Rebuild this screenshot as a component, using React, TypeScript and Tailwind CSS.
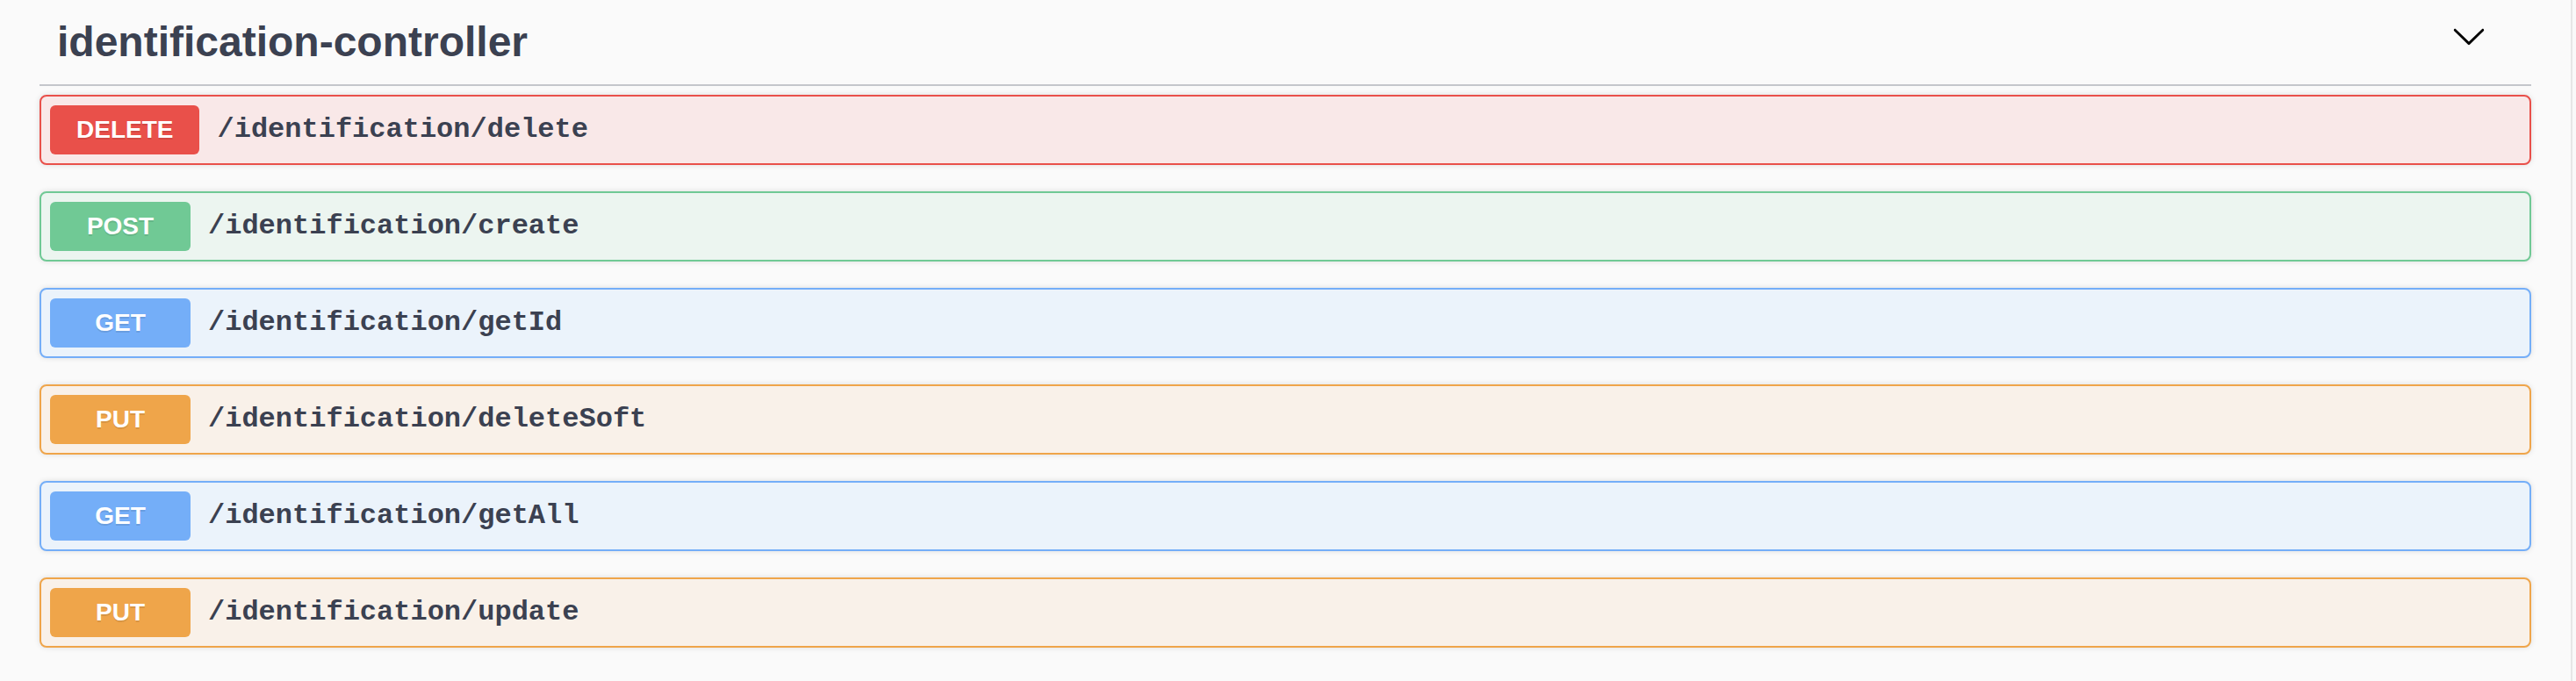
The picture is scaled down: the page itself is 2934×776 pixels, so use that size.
import { ChevronDown } from 'lucide-react';

type Method = 'DELETE' | 'POST' | 'GET' | 'PUT';

const METHOD_STYLES: Record<Method, { box: string; badge: string }> = {
  DELETE: { box: 'border-[#e9504a] bg-[#f9e8e8]', badge: 'bg-[#e9504a]' },
  POST: { box: 'border-[#70c995] bg-[#ecf5f0]', badge: 'bg-[#70c995]' },
  GET: { box: 'border-[#74aef8] bg-[#ebf3fb]', badge: 'bg-[#74aef8]' },
  PUT: { box: 'border-[#efa54a] bg-[#f9f1e9]', badge: 'bg-[#efa54a]' },
};

const OPERATIONS: { method: Method; path: string }[] = [
  { method: 'DELETE', path: '/identification/delete' },
  { method: 'POST', path: '/identification/create' },
  { method: 'GET', path: '/identification/getId' },
  { method: 'PUT', path: '/identification/deleteSoft' },
  { method: 'GET', path: '/identification/getAll' },
  { method: 'PUT', path: '/identification/update' },
];

function Operation({ method, path }: { method: Method; path: string }) {
  const style = METHOD_STYLES[method];
  return (
    <div
      className={`mb-[30px] flex items-center rounded-[8px] border-2 p-[10px] shadow-[0_0_6px_rgba(0,0,0,0.12)] ${style.box}`}
    >
      <span
        className={`min-w-[160px] rounded-[6px] px-[30px] py-[12px] text-center text-[28px] leading-[32px] font-bold text-white [text-shadow:0_2px_0_rgba(0,0,0,0.1)] ${style.badge}`}
        style={{ fontFamily: '"Liberation Sans", Arial, sans-serif' }}
      >
        {method}
      </span>
      <span
        className="px-[20px] text-[32px] leading-[40px] font-bold text-[#3b4151]"
        style={{ fontFamily: '"Liberation Mono", "Courier New", monospace' }}
      >
        {path}
      </span>
    </div>
  );
}

export default function App() {
  return (
    <div className="flex h-[776px] w-[2934px] bg-[#fafafa]">
      <div className="ml-[45px] w-[2838px]">
        <div className="mb-[10px] flex items-start border-b-2 border-[#c4c6cb] pt-[20px] pb-[20px] pl-[20px]">
          <h4
            className="flex-1 text-[48px] leading-[56px] font-bold text-[#3b4151]"
            style={{ fontFamily: '"Liberation Sans", Arial, sans-serif' }}
          >
            identification-controller
          </h4>
          <svg
            className="mt-[1px] mr-[51px]"
            width="40"
            height="40"
            viewBox="0 0 20 20"
            fill="#000"
          >
            <path d="M17.418 6.109c.272-.268.709-.268.979 0s.271.701 0 .969l-7.908 7.83c-.27.268-.707.268-.979 0l-7.908-7.83c-.27-.268-.27-.701 0-.969.271-.268.709-.268.979 0L10 13.25l7.418-7.141z" />
          </svg>
        </div>
        {OPERATIONS.map((op, i) => (
          <Operation key={i} method={op.method} path={op.path} />
        ))}
      </div>
      <div className="ml-auto w-[6px] border-l-2 border-[#e6e6e6] bg-[#f9f9f9]" />
    </div>
  );
}
